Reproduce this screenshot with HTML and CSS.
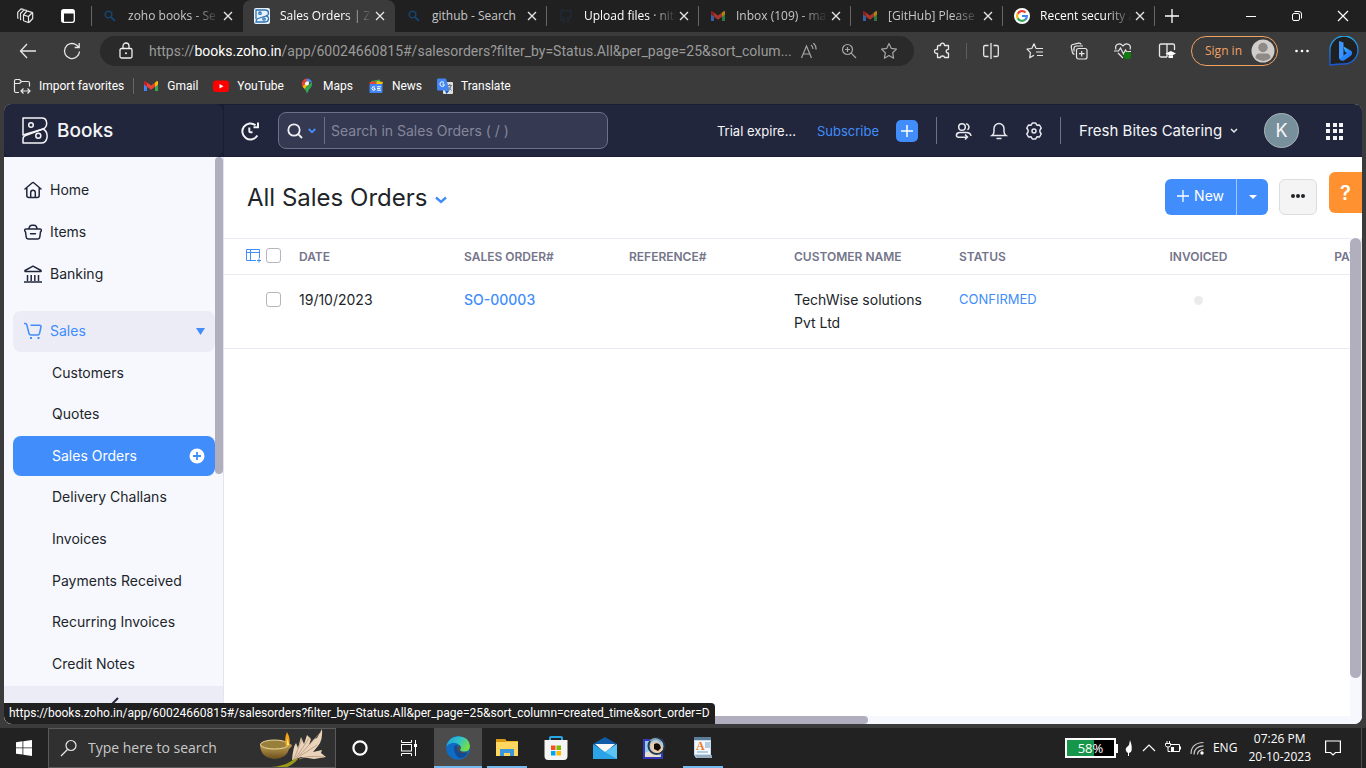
FILE: index.html
```html
<!DOCTYPE html>
<html lang="en">
<head>
<meta charset="utf-8">
<title>Sales Orders | Zoho Books</title>
<link rel="stylesheet" href="styles.css">
</head>
<body>
<svg class="defs" aria-hidden="true">
  <symbol id="close" viewBox="0 0 16 16"><path d="M4 4l8 8M12 4l-8 8" fill="none" stroke="currentColor" stroke-width="1.3"/></symbol>
  <symbol id="find" viewBox="0 0 16 16"><circle cx="6.500" cy="6.500" r="3.300" fill="none" stroke="#17426a" stroke-width="1.600"/><path d="M9 9l4 4" stroke="#17426a" stroke-width="2"/></symbol>
  <symbol id="gmail" viewBox="0 0 16 16"><path d="M1 4v9h3V6z" fill="#4285f4"/><path d="M15 4v9h-3V6z" fill="#34a853"/><path d="M1 3.500v3l3 2.200V4.500L2.800 3.400Q1.500 2.600 1 3.500z" fill="#c5221f"/><path d="M4 4.500l4 3 4-3v4.200l-4 3-4-3z" fill="#ea4335"/><path d="M15 3.500v3l-3 2.200V4.500l1.200-1.100q1.300-.8 1.800.1z" fill="#fbbc04"/></symbol>
  <symbol id="books" viewBox="0 0 26 27"><g fill="none" stroke="currentColor" stroke-width="1.500" stroke-linejoin="round"><path d="M1 18V1H20c5.500 0 6.500 8.500 1 11z"/><path d="M21 12L3.500 18.500Q1 19.500 1 22v4h18c7.500 0 8-11 2-14"/><circle cx="9" cy="8" r="2.300"/><circle cx="16.300" cy="18.800" r="2.500"/></g></symbol>
</svg>

<header class="browser">
  <div class="tabstrip">
    <button class="strip-btn" aria-label="Workspaces"><svg width="18" height="18" viewBox="0 0 18 18" fill="none" stroke="#e8e8e8" stroke-width="1.200" stroke-linejoin="round"><path d="M7.500 8l3-3.500q.5-.6 1.200-.4L16 5.300q.7.300.7 1v5.200L13.500 15q-.5.700-1.200.5L8.200 14q-.7-.3-.7-1zM7.500 8l5 1.500L16.500 5.500M12.500 9.500v6M5.200 13q-.7-.3-.7-1V6.500L8 2.800l3 .7M2.500 11.500q-.8-.3-.8-1V5.300L5 1.800l2.500.5"/></svg></button>
    <button class="strip-btn" aria-label="Tab actions"><svg width="16" height="16" viewBox="0 0 16 16"><rect x="1.700" y="1.700" width="12.600" height="12.600" rx="2" fill="none" stroke="#fff" stroke-width="1.300"/><path d="M2 2h12v3.500H2zM2 5.500h2V14H2z" fill="#fff"/></svg></button>
    <div class="tabs" role="tablist">
      <div class="tab sep-left" role="tab"><svg class="i16"><use href="#find"/></svg><span class="tab-title">zoho books - Se</span><button class="tab-x" aria-label="Close tab"><svg class="i16"><use href="#close"/></svg></button></div>
      <div class="tab active" role="tab" aria-selected="true"><svg class="i16 fav" viewBox="0 0 16 16"><rect width="16" height="16" rx="2" fill="#e8f2fa"/><g fill="none" stroke="#2e74b5" stroke-width="1.300"><path d="M2 11V2h9c4.500 0 4.500 5 1 6L4 10.500q-2 .8-2 3.500h9c4.500 0 4.500-6 1-6"/><circle cx="6" cy="5.200" r="1.200"/><circle cx="10" cy="11" r="1.200"/></g></svg><span class="tab-title">Sales Orders | Zo</span><button class="tab-x" aria-label="Close tab"><svg class="i16"><use href="#close"/></svg></button></div>
      <div class="tab sep-right full" role="tab"><svg class="i16"><use href="#find"/></svg><span class="tab-title">github - Search</span><button class="tab-x" aria-label="Close tab"><svg class="i16"><use href="#close"/></svg></button></div>
      <div class="tab sep-right lit" role="tab"><svg class="i16" viewBox="0 0 16 16"><path d="M6 15v-2.500c-3 .7-3.200-1.300-4.200-1.700M10 15v-3q0-1-.6-1.500c3-.4 4-1.500 4-4q0-1.300-.9-2.300.4-1.200-.1-2.200-1.200 0-2.400.9-2-.5-4 0Q4.800 2 3.600 2q-.5 1 0 2.200-1 1-1 2.300c0 2.500 1 3.600 4 4" fill="none" stroke="#202a35" stroke-width="1.700"/></svg><span class="tab-title">Upload files · nitl</span><button class="tab-x" aria-label="Close tab"><svg class="i16"><use href="#close"/></svg></button></div>
      <div class="tab sep-right dim" role="tab"><svg class="i16"><use href="#gmail"/></svg><span class="tab-title">Inbox (109) - ma</span><button class="tab-x" aria-label="Close tab"><svg class="i16"><use href="#close"/></svg></button></div>
      <div class="tab sep-right dim" role="tab"><svg class="i16"><use href="#gmail"/></svg><span class="tab-title">[GitHub] Please</span><button class="tab-x" aria-label="Close tab"><svg class="i16"><use href="#close"/></svg></button></div>
      <div class="tab sep-right lit" role="tab"><svg class="i16" viewBox="0 0 16 16"><circle cx="8" cy="8" r="8" fill="#fff"/><g fill="none" stroke-width="2.200"><path d="M11.500 4.500A4.900 4.900 0 0 0 3.700 5.800" stroke="#ea4335"/><path d="M3.700 5.800a4.900 4.900 0 0 0 0 4.400" stroke="#fbbc05"/><path d="M3.700 10.200a4.900 4.900 0 0 0 7.500 1.500" stroke="#34a853"/><path d="M11.200 11.700Q12.900 10.300 12.900 8H8" stroke="#4285f4"/></g></svg><span class="tab-title">Recent security a</span><button class="tab-x" aria-label="Close tab"><svg class="i16"><use href="#close"/></svg></button></div>
      <button class="new-tab" aria-label="New tab"><svg class="i16" viewBox="0 0 16 16"><path d="M8 1v14M1 8h14" stroke="#fff" stroke-width="1.300"/></svg></button>
    </div>
    <div class="win-controls">
      <button aria-label="Minimize"><svg width="12" height="12" viewBox="0 0 12 12"><path d="M1 6.500h10" stroke="#fff"/></svg></button>
      <button aria-label="Restore"><svg width="12" height="12" viewBox="0 0 12 12" fill="none" stroke="#fff"><rect x="1.500" y="3.500" width="7" height="7" rx="1.500"/><path d="M3.500 1.500H8q2.500 0 2.500 2.500v4.500"/></svg></button>
      <button aria-label="Close window"><svg width="12" height="12" viewBox="0 0 12 12"><path d="M1 1l10 10M11 1L1 11" stroke="#fff" stroke-width="1.200"/></svg></button>
    </div>
  </div>

  <div class="toolbar">
    <button class="tool" aria-label="Back"><svg width="18" height="18" viewBox="0 0 18 18" fill="none" stroke="#e8e8e8" stroke-width="1.300"><path d="M17 9H1.500M8 2L1.500 9 8 16"/></svg></button>
    <button class="tool" aria-label="Refresh"><svg width="18" height="18" viewBox="0 0 18 18" fill="none" stroke="#e8e8e8" stroke-width="1.300"><path d="M16.500 9.500A7.500 7.500 0 1 1 13.500 3L16 5.200M16.200 1v4.500h-4.500"/></svg></button>
    <div class="address">
      <svg class="lock" width="16" height="18" viewBox="0 0 16 18"><rect x="2" y="6.500" width="12" height="9.500" rx="1.500" fill="none" stroke="#f0f0f0" stroke-width="1.300"/><path d="M5 6.500V4a3 3 0 0 1 6 0v2.500" fill="none" stroke="#f0f0f0" stroke-width="1.300"/><circle cx="8" cy="11.200" r="1" fill="#f0f0f0"/></svg>
      <div class="url" role="textbox" aria-label="Address" tabindex="0">https://<b>books.zoho.in</b>/app/60024660815#/salesorders?filter_by=Status.All&amp;per_page=25&amp;sort_colum...</div>
      <button class="addr-btn" aria-label="Read aloud"><svg width="18" height="16" viewBox="0 0 18 16" fill="none" stroke="#a6a6a6" stroke-width="1.200"><path d="M1.500 15L6.500 3l5 12M3.200 11h6.600M11 2q2 1.500 2 4M13.300 0q3 2.500 2.700 6.500"/></svg></button>
      <button class="addr-btn" aria-label="Zoom"><svg width="16" height="16" viewBox="0 0 16 16" fill="none" stroke="#a6a6a6" stroke-width="1.200"><circle cx="6.500" cy="6.500" r="5"/><path d="M10.200 10.200L15 15M6.500 4v5M4 6.500h5"/></svg></button>
      <button class="addr-btn" aria-label="Add to favorites"><svg width="18" height="18" viewBox="0 0 18 18" fill="none" stroke="#a6a6a6" stroke-width="1.200" stroke-linejoin="round"><path d="M9 1.500l2.300 4.900 5.200.7-3.800 3.700.9 5.400L9 13.600l-4.600 2.600.9-5.400L1.500 7.100l5.200-.7z"/></svg></button>
    </div>
    <div class="tools">
      <button class="tool" aria-label="Extensions"><svg width="18" height="18" viewBox="0 0 18 18" fill="none" stroke="#e8e8e8" stroke-width="1.300" stroke-linejoin="round"><path d="M5.500 3.500h2q0-2.300 2-2.300t2 2.300H15.500v3.800q-2.300 0-2.300 1.900t2.300 1.900v4.400H11.500q0-1.500-2-1.500t-2 1.500h-3v-4Q1.500 11.500 1.500 9.300T4.500 7.500v-3q0-1 1-1z"/></svg></button>
      <span class="tool-sep"></span>
      <button class="tool" aria-label="Split screen"><svg width="18" height="18" viewBox="0 0 18 18" fill="none" stroke="#e8e8e8" stroke-width="1.300"><path d="M9 1v16M6.500 3.500H3Q1.700 3.500 1.700 5v8q0 1.500 1.300 1.500h3.500M11.500 3.500H15q1.300 0 1.300 1.500v8q0 1.500-1.300 1.500h-3.500"/></svg></button>
      <button class="tool" aria-label="Favorites"><svg width="18" height="18" viewBox="0 0 18 18" fill="none" stroke="#e8e8e8" stroke-width="1.200" stroke-linejoin="round"><path d="M10 6.500L8 1.800 5.800 6.500l-4.800.6 3.500 3.500-.8 5.200L8 13.300M10 6.500h7M10 10h7M11 13.500h6"/></svg></button>
      <button class="tool" aria-label="Collections"><svg width="18" height="18" viewBox="0 0 18 18" fill="none" stroke="#e8e8e8" stroke-width="1.200"><rect x="6.500" y="6.500" width="10.500" height="10.500" rx="2"/><path d="M11.700 9v5.500M9 11.700h5.500M4.500 12.500Q2.800 12 2.300 10L1.200 5q-.2-2 1.500-2.500l6-1.300q2-.2 2.500 1.300M4 9.500V6.500q0-2.500 2.500-2.500H13"/></svg></button>
      <button class="tool" aria-label="Browser essentials"><svg width="18" height="18" viewBox="0 0 18 18" fill="none" stroke="#e8e8e8" stroke-width="1.200"><path d="M2 7.500Q.8 4 3.200 2.500 6.500.8 9 4q2.500-3.200 5.800-1.500Q17.200 4 16 7.500M4 11l5 5M0 9h4.500L6.500 6l3 6 2-4 1 1.500H17"/><circle cx="13.500" cy="13.500" r="3.700" fill="#107c10" stroke="none"/></svg></button>
      <button class="tool" aria-label="Immersive reader"><svg width="18" height="18" viewBox="0 0 18 18" fill="none" stroke="#e8e8e8" stroke-width="1.300"><path d="M9 15V2H3Q1.500 2 1.500 3.500v10Q1.500 15 3 15h6M9 2h6q1.500 0 1.500 1.500V8"/><path d="M7.500 11.500L13 9l5 2.500-5 2.500zM10.500 13.500v2.500h4.500v-2.500z" fill="#fff" stroke="none"/></svg></button>
      <button class="signin">Sign in<svg width="24" height="24" viewBox="0 0 24 24"><circle cx="12" cy="12" r="11.500" fill="#d0cdca"/><circle cx="12" cy="8.500" r="4.700" fill="#8d8a87"/><path d="M4.500 19q0-4.500 4-4.500h7q4 0 4 4.500-7 6-15 0z" fill="#8d8a87"/></svg></button>
      <button class="tool" aria-label="Settings and more"><svg width="16" height="4" viewBox="0 0 16 4" fill="#fff"><circle cx="2.500" cy="2" r="1.300"/><circle cx="8" cy="2" r="1.300"/><circle cx="13.500" cy="2" r="1.300"/></svg></button>
      <button class="bing" aria-label="Bing"><svg width="30" height="30" viewBox="0 0 30 30"><defs><linearGradient id="bg1" x1="0" y1="0" x2="0" y2="1"><stop offset="0" stop-color="#25a8ef"/><stop offset="1" stop-color="#1a57d8"/></linearGradient><linearGradient id="bg2" x1="0" y1="0" x2="1" y2="1"><stop offset="0" stop-color="#48e1e5"/><stop offset=".5" stop-color="#258bff"/><stop offset="1" stop-color="#2f6fff"/></linearGradient></defs><path d="M1 29V15A14 14 0 1 1 15 28Q8 28 1 29z" fill="#202020" stroke="url(#bg1)" stroke-width="1.300"/><path d="M10 5l4.500 1.500V20l-1.500 4.500-3-2.500z" fill="#3d93ff"/><path d="M14.500 10.500l8 4.500q1.500 3-1 5L15 24.500q-3 1-5-2l8-5.500-2-1z" fill="url(#bg2)"/></svg></button>
    </div>
  </div>

  <nav class="favorites" aria-label="Favorites bar">
    <a href="#"><svg width="18" height="16" viewBox="0 0 18 16" fill="none" stroke="#e8e8e8" stroke-width="1.200"><path d="M6 14.500H3Q1.500 14.500 1.500 13V3Q1.500 1.500 3 1.500h3.500l2 2H15q1.500 0 1.500 1.500v3.500M1.500 5.500h5l2-2M8.500 13h8M10.500 10.500L8 13l2.500 2.500M14.500 10.500L17 13l-2.500 2.500"/></svg>Import favorites</a>
    <span class="fav-sep"></span>
    <a href="#"><svg class="i16"><use href="#gmail"/></svg>Gmail</a>
    <a href="#"><svg class="i16" viewBox="0 0 16 16"><rect y="2.500" width="16" height="11.500" rx="3" fill="#f00"/><path d="M6.500 6l4 2.300-4 2.300z" fill="#fff"/></svg>YouTube</a>
    <a href="#"><svg class="i16" viewBox="0 0 16 16"><path d="M8 .5A5.300 5.300 0 0 0 3.800 2.700L8 6z" fill="#ea4335"/><path d="M8 .5l-1 4.800L12.900 4Q11.500.7 8 .5z" fill="#4285f4"/><path d="M3.800 2.700Q1.800 5.500 3.500 8.500L7 5.300z" fill="#ea4335"/><path d="M3.500 8.500l6-6q1 3.500-1 5l-3 3.500z" fill="#fbbc04"/><path d="M12.900 4q.9 2.500-.6 4.700Q9 12 8 15.800 7.300 13 5.500 11z" fill="#34a853"/><circle cx="8" cy="5.500" r="1.900" fill="#fff"/></svg>Maps</a>
    <a href="#"><svg class="i16" viewBox="0 0 16 16"><path d="M3 3l9-1.500V6H3z" fill="#34a853"/><path d="M1 4.500l6-1.500 1 3H2z" fill="#ea4335"/><path d="M9 3l6 1-1 3H8z" fill="#fbbc04"/><rect x="1.500" y="6" width="13" height="9" rx="1" fill="#4285f4"/><path d="M7 9q-3-1-3 1.500T7 12v-1.500H5.800M9 8.800h4M9 10.500h3.300M9 12.200h4" stroke="#fff" fill="none"/></svg>News</a>
    <a href="#"><svg class="i16" viewBox="0 0 16 16"><rect x="6" y="4" width="10" height="12" rx="1" fill="#e0e0e0"/><path d="M0 1.500Q0 .5 1 .5h8l3.500 12H1q-1 0-1-1z" fill="#4285f4"/><path d="M8 12.500h4.500L9.500 16z" fill="#1a57c0"/><path d="M7 4.300Q3 2.800 3 6t4 2V6H5.500" fill="none" stroke="#fff"/><path d="M10.500 7.500H15M12.800 6v1.500M14 7.800q-.5 2.500-2 4M11.700 9l2.800 3.500" fill="none" stroke="#6a7580"/></svg>Translate</a>
  </nav>
</header>

<div class="app">
  <header class="app-bar">
    <a class="brand" href="#"><svg width="26" height="27"><use href="#books"/></svg>Books</a>
    <div class="app-bar-main">
      <button class="ic history" aria-label="Recent"><svg width="20" height="20" viewBox="0 0 20 20" fill="none" stroke="#f2f2f5" stroke-width="2"><path d="M17.300 14.500A8 8 0 1 1 15.500 4.300M18 1.500v4.700h-4.500M9.300 6.500v3.700q0 1 1 1h2.200"/></svg></button>
      <div class="search">
        <button class="ic" aria-label="Search scope"><svg width="16" height="16" viewBox="0 0 16 16" fill="none" stroke="#f2f2f5" stroke-width="1.800"><circle cx="7" cy="7" r="5.700"/><path d="M11.200 11.200L15 15"/></svg><svg width="8" height="6" viewBox="0 0 8 6" fill="none" stroke="#408dfb" stroke-width="1.800"><path d="M.7 1L4 4.200 7.300 1"/></svg></button>
        <input type="text" aria-label="Search in Sales Orders" placeholder="Search in Sales Orders ( / )">
      </div>
      <span class="trial">Trial expire...</span>
      <a class="subscribe" href="#">Subscribe</a>
      <button class="quick" aria-label="Quick create"><svg width="12" height="12" viewBox="0 0 12 12"><path d="M6 0v12M0 6h12" stroke="#fff" stroke-width="1.500"/></svg></button>
      <div class="icons">
        <button class="ic" aria-label="Referrals"><svg width="18" height="18" viewBox="0 0 18 18" fill="none" stroke="#e8e8ee" stroke-width="1.500"><circle cx="7" cy="5" r="3.300"/><path d="M11 1.800a3.300 3.300 0 0 1 1.500 6M1.500 14Q1 10.500 5 10.500h5q5.500-.5 6 3.500M3.500 11q-2 .5-2 2.500 0 1.700 2 1.700h8.500M10 12.500l2.500 2.500-2.500 2.500"/></svg></button>
        <button class="ic" aria-label="Notifications"><svg width="18" height="18" viewBox="0 0 18 18" fill="none" stroke="#e8e8ee" stroke-width="1.500"><path d="M2 13.500h14q-2-1.500-2-4V6.500a5 5 0 0 0-10 0v3q0 2.500-2 4zM6.500 16.500h5"/></svg></button>
        <button class="ic" aria-label="Settings"><svg width="18" height="18" viewBox="0 0 18 18" fill="none" stroke="#e8e8ee" stroke-width="1.500" stroke-linejoin="round"><path d="M7.300 1h3.400l1.200 2.200 2.600-.2 1.700 3-1.300 2.200v1.600l1.300 2.200-1.700 3-2.600-.2-1.200 2.200H7.300l-1.200-2.200-2.600.2-1.700-3 1.300-2.200V8.200L1.800 6l1.700-3 2.600.2z"/><circle cx="9" cy="9" r="2"/></svg></button>
      </div>
      <button class="org">Fresh Bites Catering<svg width="8" height="6" viewBox="0 0 8 6" fill="none" stroke="#e8e8ee" stroke-width="1.500"><path d="M1 1l3 3 3-3"/></svg></button>
      <button class="avatar" aria-label="Account">K</button>
      <button class="ic" aria-label="All apps"><svg width="18" height="18" viewBox="0 0 18 18" fill="#f5f5f8"><path d="M0 1h4v4H0zM7 1h4v4H7zM13 1h4v4h-4zM0 7h4v4H0zM7 7h4v4H7zM13 7h4v4h-4zM0 14h4v4H0zM7 14h4v4H7zM13 14h4v4h-4z"/></svg></button>
    </div>
  </header>

  <div class="body">
    <aside class="sidebar">
      <div class="side-scroll">
        <nav class="side-nav" aria-label="Modules">
          <div class="side-top">
            <a href="#"><svg width="18" height="18" viewBox="0 0 18 18" fill="none" stroke="#21263c" stroke-width="1.500" stroke-linejoin="round" stroke-linecap="round"><path d="M1 8l7-6q1-.8 2 0l7 6M2.800 7v7.500q0 2 2 2h8.400q2 0 2-2V7M6.700 16v-4.500a2.300 2.300 0 0 1 4.600 0V16"/></svg>Home</a>
            <a href="#"><svg width="18" height="18" viewBox="0 0 18 18" fill="none" stroke="#21263c" stroke-width="1.500" stroke-linejoin="round" stroke-linecap="round"><path d="M2 6h14q1.500 0 1.300 1.500-.1.900-.8 1.300l-.7 5.200q-.3 2-2.300 2h-9q-2 0-2.300-2l-.7-5.200Q.8 8.400.7 7.500.5 6 2 6zM4.800 6Q5.500 2.200 8 2.200h2q2.500 0 3.200 3.800M6.500 10.800h5"/></svg>Items</a>
            <a href="#"><svg width="18" height="18" viewBox="0 0 18 18" fill="none" stroke="#21263c" stroke-width="1.500" stroke-linejoin="round"><path d="M1 6.500v-1L9 1.200l8 4.300v1zM3.500 10v6M7.200 10v6M10.800 10v6M14.500 10v6M0 17h18"/></svg>Banking</a>
          </div>
          <div class="side-group">
            <a class="group-head" href="#"><svg width="18" height="18" viewBox="0 0 18 18" fill="none" stroke="#408dfb" stroke-width="1.500" stroke-linejoin="round"><path d="M0 1.500h1.500q1 0 1.300 1.200L5 11.500q.4 1.500 2 1.500h6.500q1.700 0 2-1.500L17 5q.3-1.800-1.500-1.800H6.500"/><path d="M6 15h2v2H6zM13.500 15h2v2h-2z" fill="#408dfb" stroke="none"/></svg>Sales<svg class="end" width="9" height="7" viewBox="0 0 9 7"><path d="M0 0h9L4.500 7z" fill="#408dfb"/></svg></a>
            <a href="#">Customers</a>
            <a href="#">Quotes</a>
            <a class="current" href="#" aria-current="page">Sales Orders<svg class="end" width="16" height="16" viewBox="0 0 16 16"><circle cx="8" cy="8" r="7.500" fill="#fff"/><path d="M8 4v8M4 8h8" stroke="#408dfb" stroke-width="1.800"/></svg></a>
            <a href="#">Delivery Challans</a>
            <a href="#">Invoices</a>
            <a href="#">Payments Received</a>
            <a href="#">Recurring Invoices</a>
            <a href="#">Credit Notes</a>
          </div>
        </nav>
        <div class="side-track"><span class="side-thumb"></span></div>
      </div>
      <button class="collapse" aria-label="Collapse sidebar"><svg width="10" height="16" viewBox="0 0 10 16" fill="none" stroke="#21263c" stroke-width="2"><path d="M9 1L2 8l7 7"/></svg></button>
    </aside>

    <main class="content">
      <div class="page-head">
        <h1>All Sales Orders<svg width="12" height="8" viewBox="0 0 12 8" fill="none" stroke="#408dfb" stroke-width="2.400"><path d="M1 1.500l5 4.500 5-4.500"/></svg></h1>
        <div class="actions">
          <div class="split">
            <button class="new"><svg width="12" height="12" viewBox="0 0 12 12"><path d="M6 0v12M0 6h12" stroke="#fff" stroke-width="1.300"/></svg>New</button>
            <button class="drop" aria-label="More create options"><svg width="8" height="4" viewBox="0 0 8 4"><path d="M0 0h8L4 4z" fill="#fff"/></svg></button>
          </div>
          <button class="more" aria-label="More actions"><svg width="16" height="6" viewBox="0 0 16 6" fill="#212529"><circle cx="3" cy="3" r="2"/><circle cx="8" cy="3" r="2"/><circle cx="13" cy="3" r="2"/></svg></button>
        </div>
        <button class="help" aria-label="Help">?</button>
      </div>
      <div class="list-area">
        <div class="list-scroll">
          <table>
            <thead>
              <tr>
                <th class="pick"><span><svg width="15" height="14" viewBox="0 0 15 14" fill="none" stroke="#408dfb"><path d="M10 11.500H.5V.5h13V9M.5 3.500h13M4.500 .5v11M13 9.500v4M11 11.500h4"/></svg><input type="checkbox" aria-label="Select all"></span></th>
                <th>DATE</th><th>SALES ORDER#</th><th>REFERENCE#</th><th>CUSTOMER NAME</th><th>STATUS</th><th class="mid">INVOICED</th><th class="mid">PAYMENT</th>
              </tr>
            </thead>
            <tbody>
              <tr>
                <td class="pick"><span><input type="checkbox" aria-label="Select SO-00003"></span></td>
                <td>19/10/2023</td><td><a class="order" href="#">SO-00003</a></td><td></td><td>TechWise solutions Pvt Ltd</td><td class="status">CONFIRMED</td><td class="mid"><span class="dot"></span></td><td></td>
              </tr>
            </tbody>
          </table>
        </div>
        <div class="v-track"><span class="v-thumb"></span></div>
      </div>
      <div class="h-track"><span class="h-thumb"></span></div>
    </main>
  </div>
  <div class="status-url">https://books.zoho.in/app/60024660815#/salesorders?filter_by=Status.All&amp;per_page=25&amp;sort_column=created_time&amp;sort_order=D</div>
</div>

<footer class="taskbar">
  <button class="start" aria-label="Start"><svg width="16" height="16" viewBox="0 0 16 16" fill="#fff"><path d="M0 2.200l6.500-.9v6.200H0zM7.300 1.200L16 0v7.500H7.300zM0 8.300h6.500v6.300L0 13.700zM7.300 8.300H16V16l-8.700-1.200z"/></svg></button>
  <div class="task-search">
    <svg width="18" height="18" viewBox="0 0 18 18" fill="none" stroke="#e8e8e8" stroke-width="1.200"><circle cx="11" cy="6.500" r="5"/><path d="M7.500 10.500L1 17"/></svg>
    <input type="text" aria-label="Search" placeholder="Type here to search">
    <svg class="lamp" width="72" height="38" viewBox="0 0 72 38"><defs><linearGradient id="bowl" x1="0" y1="0" x2="0" y2="1"><stop offset="0" stop-color="#c9a85c"/><stop offset="1" stop-color="#6b4f1c"/></linearGradient></defs><path d="M12 38q14-1 22-7l3-3 2 2q-7 8-15 9z" fill="#9a9a16"/><path d="M1 15q0 14 15 15 12-1 14-10 3-2 3-4l-4-2z" fill="url(#bowl)"/><ellipse cx="15.500" cy="15.500" rx="14" ry="4.500" fill="#98803c" stroke="#ecd79a"/><path d="M27 17q-2-7 1-14 4 7 2 14z" fill="#f6a318"/><path d="M28 16l.5-7 1.500 7z" fill="#fff3a0"/><path d="M33 31q1-13 4-17l2 5 3-11 3 7 3-9 4 4-2 6 5-6 3-1 5-9q1 11-4 17l-5 6 9-2-1 3 5 4-12 2-13-2z" fill="#e9d3ba"/><path d="M35 30L43 10M36 30L51 8M37 30L62 3M40 30q10-4 25-2M41 27l17-11" stroke="#b7977a" stroke-width=".800" fill="none"/></svg>
  </div>
  <div class="tasks">
    <button class="task" aria-label="Cortana"><svg width="16" height="16" viewBox="0 0 16 16"><circle cx="8" cy="8" r="6.600" fill="none" stroke="#fff" stroke-width="2.200"/></svg></button>
    <button class="task" aria-label="Task view"><svg width="16" height="16" viewBox="0 0 16 16" fill="none" stroke="#fff"><path d="M.5 0v2.500h10V0M.5 16v-2.500h10V16M14.500 0v16"/><rect x=".5" y="4.500" width="10" height="6.500"/><path d="M13 4h3v3h-3z" fill="#fff" stroke="none"/></svg></button>
    <button class="task focused" aria-label="Microsoft Edge"><svg width="24" height="24" viewBox="0 0 24 24"><defs><linearGradient id="e1" x1="0" y1="0" x2="1" y2=".5"><stop offset="0" stop-color="#1a9de0"/><stop offset=".55" stop-color="#32c3c8"/><stop offset="1" stop-color="#70e046"/></linearGradient></defs><circle cx="12" cy="12" r="11.800" fill="#0f6cc4"/><path d="M.5 11Q1.500 1 12 .2 23 .5 24 10q0 5.500-6 5.500-4 0-4-2 1.500-2 0-4Q11 6 6 7 1.500 8 .5 11z" fill="url(#e1)"/><path d="M8 11q1-2.500 4-2.500-2 2.500 0 5.500 4 4.500 10 2-3 6-8 6-6-2-6-11z" fill="#134a93"/><path d="M14 9.500q1.500 2 0 4 0 2.500 4 2.500 3 0 5-1.500-3 3-7 2.500-5-1-5-5 0-2 3-2.500z" fill="#4c4c4c"/></svg></button>
    <button class="task open" aria-label="File Explorer"><svg width="22" height="20" viewBox="0 0 22 20"><path d="M0 1h9l1.500 2H22v15H0z" fill="#f2b82c"/><path d="M0 4h22v14H0z" fill="#ffd75e"/><path d="M0 1h9l1 3H0z" fill="#d89a15"/><path d="M4 11h14v7h-4v-3H8v3H4z" fill="#3b97dc"/></svg></button>
    <button class="task" aria-label="Microsoft Store"><svg width="24" height="24" viewBox="0 0 24 24"><path d="M6 5V2q0-1 1-1h10q1 0 1 1v3" fill="none" stroke="#27a8ea" stroke-width="2"/><path d="M.5 4h23v16q0 4-3.500 4H4Q.5 24 .5 20z" fill="#f5f5f5"/><path d="M7 9.500h4.500V14H7z" fill="#f25022"/><path d="M12.500 9.500H17V14h-4.500z" fill="#7fba00"/><path d="M7 15h4.500v4.500H7z" fill="#00a4ef"/><path d="M12.500 15H17v4.500h-4.500z" fill="#ffb900"/></svg></button>
    <button class="task" aria-label="Mail"><svg width="24" height="22" viewBox="0 0 24 22"><path d="M0 7l12-7 12 7-12 8z" fill="#0f5ba8"/><path d="M2 7h20l-9 8h-2z" fill="#f7f7f7"/><path d="M0 7l12 8 12-8v15H0z" fill="#2aa4e6"/><path d="M24 7v15L12 15z" fill="#5cc5f8"/></svg></button>
    <button class="task" aria-label="Image viewer"><svg width="24" height="24" viewBox="0 0 24 24"><rect x="2" y="4" width="18" height="18" fill="#92c9e8" stroke="#3637b8" stroke-width="2"/><path d="M3 17l8-4 8 8H3z" fill="#e7dfd1"/><circle cx="14.500" cy="10" r="8" fill="#b4c7d4" stroke="#26384e" stroke-width="2"/><path d="M9 8q5-4 10 1l2 4q-2 4-6 4-4-1-6-4z" fill="#efcda8"/><path d="M12 8q4-2 6 1l1 3-3 3-4-2z" fill="#140c08"/><path d="M8 5q6-5 11 1" stroke="#87a5b8" fill="none" stroke-width="1.500"/></svg></button>
    <button class="task open" aria-label="WordPad"><svg width="20" height="22" viewBox="0 0 20 22"><path d="M1 2h17v16l1 3H3l-2-3z" fill="#c7dcee"/><path d="M1 0h17v3H1z" fill="#5d7c98"/><path d="M2 4h15v13H2z" fill="#f4f9fd"/><text x="3" y="13" font-family="Liberation Serif, serif" font-size="12" font-weight="bold" fill="#ee7a24">A</text><path d="M12 6h5M12 8h5M12 10h5M4 15h11" stroke="#719fc8"/><path d="M2 18h17l-1 3H4z" fill="#96adc0"/></svg></button>
  </div>
  <div class="tray">
    <span class="battery">58%</span>
    <svg width="8" height="16" viewBox="0 0 8 16"><path d="M5 0q3 8 1 12l-2 1v3H3v-3Q0 11 1 8l3-3z" fill="#fff"/></svg>
    <button aria-label="Show hidden icons"><svg width="14" height="8" viewBox="0 0 14 8" fill="none" stroke="#fff" stroke-width="1.200"><path d="M1 7l6-6 6 6"/></svg></button>
    <svg width="16" height="14" viewBox="0 0 16 14" fill="none" stroke="#fff"><path d="M6 3.500h8.500v7H5.500M15.500 5.500v3M2 0v2M4.500 0v2M.5 2.500h5v2q0 1.500-2.500 1.500T.5 4.500zM3 6v4.500h2"/><path d="M6 6h3v4H6z" fill="#fff" stroke="none"/></svg>
    <svg width="14" height="14" viewBox="0 0 14 14" fill="none" stroke="#c8c8c8" stroke-width="1.200"><path d="M1 13Q1 2 13.500 1.500M4 13.500Q4 5.500 13.500 4.800M7.500 13.500Q7.500 9 13.500 8.300"/><circle cx="12" cy="12" r="1.700" fill="#fff" stroke="none"/></svg>
    <span class="lang">ENG</span>
    <div class="clock"><span>07:26 PM</span><span>20-10-2023</span></div>
    <button aria-label="Notifications" class="notes"><svg width="16" height="16" viewBox="0 0 16 16" fill="none" stroke="#fff" stroke-width="1.200"><path d="M.6 1h14.800v11.500H10.500L8 15l-2.500-2.500H.6z"/></svg></button>
  </div>
</footer>
</body>
</html>
```

FILE: styles.css
```css
* { box-sizing: border-box; }

body {
  margin: 0;
  min-height: 100vh;
  display: flex;
  flex-direction: column;
  background: #3b3b3b;
  font: 12px/16px "Open Sans", "Noto Sans", sans-serif;
  color: #fff;
  overflow: hidden;
}

button {
  border: 0;
  padding: 0;
  margin: 0;
  background: none;
  color: inherit;
  font: inherit;
  display: flex;
  align-items: center;
  justify-content: center;
  flex-shrink: 0;
}

a { color: inherit; text-decoration: none; }
svg { flex-shrink: 0; }
.defs { display: none; }
.i16 { width: 16px; height: 16px; }

/* Browser tab strip */
.tabstrip { display: flex; height: 32px; background: #202020; padding-left: 3px; }
.strip-btn { width: 44px; }
.strip-btn + .strip-btn { width: 42px; margin-right: 2px; }
.tabs { display: flex; flex: 1; min-width: 0; }
.tab {
  flex: 0 1 152px;
  min-width: 0;
  display: flex;
  align-items: center;
  padding: 0 7px 0 11px;
  gap: 10px;
  color: #c8c8c8;
  background-repeat: no-repeat;
  background-size: 1px 20px;
}
.sep-left { background-image: linear-gradient(#666, #666); background-position: left center; }
.sep-right { background-image: linear-gradient(#666, #666); background-position: right center; }
.tab.active { background: #3b3b3b; border-radius: 8px 8px 0 0; color: #fff; }
.tab.lit { color: #fff; }
.tab.dim > svg { opacity: .65; }
.tab-title {
  flex: 1;
  min-width: 0;
  white-space: nowrap;
  -webkit-mask-image: linear-gradient(to right, #000 70%, transparent);
  mask-image: linear-gradient(to right, #000 70%, transparent);
}
.full .tab-title { -webkit-mask-image: none; mask-image: none; }
.tab-x { color: #e8e8e8; margin-left: -10px; }
.new-tab { width: 34px; }
.win-controls { display: flex; }
.win-controls button { width: 46px; }

/* Browser toolbar */
.toolbar { display: flex; align-items: center; height: 38px; padding: 0 6px; }
.tool { width: 44px; height: 30px; }
.address {
  flex: 1;
  min-width: 0;
  display: flex;
  align-items: center;
  height: 30px;
  margin: 0 6px;
  padding: 0 5px 0 18px;
  border-radius: 15px;
  background: #2a2a2a;
}
.url {
  flex: 1;
  min-width: 0;
  margin-left: 15px;
  white-space: nowrap;
  font: 14px/20px Roboto, "Open Sans", sans-serif;
  color: #9a9a9a;
}
.url b { font-weight: 400; color: #fff; }
.addr-btn { width: 40px; height: 30px; }
.tools { display: flex; align-items: center; }
.tool-sep { width: 1px; height: 16px; margin: 0 2px; background: #5e5e5e; }
.signin {
  width: 87px;
  height: 30px;
  margin: 0 2px;
  padding: 0 2px 0 13px;
  justify-content: space-between;
  border: 1px solid #f0a263;
  border-radius: 15px;
  color: #f0a263;
}
.bing { width: 32px; margin-left: 4px; }

/* Favorites bar */
.favorites { display: flex; align-items: center; height: 34px; padding: 0 13px 2px; gap: 15px; font-family: Roboto, "Open Sans", sans-serif; }
.favorites a { display: flex; align-items: center; gap: 8px; }
.fav-sep { width: 1px; height: 16px; margin: 0 -6px; background: #666; }

/* Application window */
.app {
  position: relative;
  flex: 1;
  min-height: 0;
  margin: 0 4px 4px;
  display: flex;
  flex-direction: column;
  overflow: hidden;
  border-radius: 8px;
  background: #fff;
  color: #212529;
  font: 14px/20px Inter, "Liberation Sans", sans-serif;
}
.app-bar { display: flex; height: 53px; background: #1b1d35; color: #f5f5f8; }
.brand {
  width: 219px;
  display: flex;
  align-items: center;
  gap: 9px;
  padding-left: 18px;
  background: #21263c;
  border-radius: 8px;
  font-size: 19px;
  font-weight: 500;
}
.app-bar-main {
  flex: 1;
  display: flex;
  align-items: center;
  margin: 1px 0 1px 1px;
  padding: 0 18px 0 16px;
  background: #21263c;
}
.search {
  display: flex;
  width: 330px;
  height: 37px;
  margin-left: 18px;
  margin-right: auto;
  border: 1px solid #6c718a;
  border-radius: 8px;
  background: #353952;
}
.search .ic { gap: 5px; padding: 0 8px; }
.search input {
  flex: 1;
  min-width: 0;
  margin: 4px 0;
  padding: 0 6px;
  border: 0;
  border-left: 1px solid #6c718a;
  background: none;
  color: #fff;
  font: inherit;
  outline: 0;
}
.search input::placeholder { color: #85879a; opacity: 1; }
.trial, .subscribe { font-size: 13px; }
.subscribe { margin-left: 21px; color: #408dfb; }
.quick { width: 22px; height: 22px; margin: 0 18px 0 17px; border-radius: 5px; background: #408dfb; }
.icons {
  display: flex;
  align-items: center;
  gap: 17px;
  height: 27px;
  padding: 0 17px 0 18px;
  border: solid #6c718a;
  border-width: 0 1px;
}
.org { min-width: 159px; margin-left: 18px; justify-content: space-between; font-size: 15px; }
.avatar {
  width: 35px;
  height: 35px;
  margin: 0 27px 0 26px;
  border: 1px solid #a9b5ba;
  border-radius: 50%;
  background: #78909c;
  font-size: 18px;
}

.body { flex: 1; min-height: 0; display: flex; }

/* Sidebar */
.sidebar { width: 220px; display: flex; flex-direction: column; background: #f7f8fe; border-right: 1px solid #e4e4ee; }
.side-scroll { flex: 1; min-height: 0; display: flex; }
.side-nav { flex: 1; display: flex; flex-direction: column; padding: 12px 0 2px 9px; }
.side-top, .side-group { display: grid; grid-auto-rows: 1fr; gap: 1px; }
.side-top { height: 125px; margin-bottom: 17px; }
.side-group { flex: 1; }
.side-nav a { display: flex; align-items: center; gap: 8px; padding: 0 10px 0 11px; border-radius: 8px; }
.side-group a { padding-left: 39px; }
.side-group .group-head { padding-left: 11px; background: #ececf6; color: #408dfb; }
.side-group .current { background: #408dfb; color: #fff; }
.end { margin-left: auto; }
.side-track { width: 8px; }
.side-thumb { display: block; height: 60%; border-radius: 4px; background: #b1afbe; }
.collapse { height: 38px; background: #ececf6; }

/* Sales orders list */
.content { flex: 1; min-width: 0; display: flex; flex-direction: column; }
.page-head {
  position: relative;
  display: flex;
  align-items: center;
  justify-content: space-between;
  height: 81px;
  padding: 0 45px 1px 23px;
}
h1 { display: flex; align-items: center; gap: 8px; margin: 0; padding-top: 2px; font-size: 24px; line-height: 32px; font-weight: 400; }
h1 svg { margin-top: 3px; }
.actions { display: flex; gap: 11px; }
.split { display: flex; height: 36px; border-radius: 6px; background: #408dfb; color: #fff; }
.new { gap: 5px; padding: 0 12px 2px; }
.drop { width: 32px; border-left: 1px solid #a6c9fd; }
.more { width: 38px; height: 36px; padding-bottom: 2px; border: 1px solid #ddd; border-radius: 6px; background: #f4f4f4; }
.help {
  position: absolute;
  top: 15px;
  right: 0;
  width: 33px;
  height: 41px;
  border-radius: 6px 0 0 6px;
  background: #ff9130;
  color: #fff;
  font-size: 20px;
  font-weight: 600;
}
.list-area { flex: 1; min-height: 0; display: flex; }
.list-scroll { flex: 1; min-width: 0; overflow: hidden; }
table { width: 1222px; table-layout: fixed; border-collapse: collapse; border-top: 1px solid #ebeaf2; }
tr { border-bottom: 1px solid #ebeaf2; }
th { width: 165px; height: 36px; padding: 0 8px; text-align: left; font-size: 12px; font-weight: 600; color: #74748a; }
td { padding: 13px 8px 14px; vertical-align: top; line-height: 23px; }
th.pick, td.pick { width: 67px; padding-right: 10px; }
th.pick { padding-bottom: 2px; }
.pick span { display: flex; align-items: center; justify-content: flex-end; gap: 5px; height: 23px; }
.pick input {
  appearance: none;
  width: 15px;
  height: 15px;
  margin: 0;
  border: 1px solid #b5b5bd;
  border-radius: 3px;
  background: #fff;
}
.mid { text-align: center; }
.order { color: #408dfb; font-weight: 500; }
.status { color: #408dfb; font-size: 13px; }
.dot { display: inline-block; width: 9px; height: 9px; border-radius: 50%; background: #ebebeb; }
.v-track { width: 12px; background: #f7f8fe; border-right: 1px solid #e4e4ee; }
.v-thumb { display: block; height: 92%; border-radius: 6px; background: #b1afbe; }
.h-track { height: 8px; background: #f7f8fe; }
.h-thumb { display: block; width: 644px; height: 8px; border-radius: 4px; background: #b1afbe; }

.status-url {
  position: absolute;
  left: 0;
  bottom: 0;
  height: 21px;
  padding: 0 5px;
  border-radius: 0 4px 0 0;
  background: #202020;
  color: #fff;
  font: 12px/21px Roboto, "Open Sans", sans-serif;
  white-space: nowrap;
}

/* Desktop taskbar */
.taskbar { display: flex; height: 40px; background: #222; }
.start { width: 48px; }
.task-search {
  display: flex;
  align-items: center;
  width: 288px;
  padding: 0 4px 0 11px;
  border: 1px solid #5a5a5a;
  background: #303030;
}
.task-search input {
  flex: 1;
  min-width: 0;
  padding: 0 0 0 10px;
  border: 0;
  background: none;
  color: #fff;
  font: 14px/20px "Open Sans", "Noto Sans", sans-serif;
  outline: 0;
}
.task-search input::placeholder { color: #c8c8c8; opacity: 1; }
.tasks { display: flex; gap: 1px; }
.task { width: 48px; }
.focused { background: #4c4c4c; box-shadow: inset 0 -2px #76b9ed; }
.open { background: linear-gradient(#76b9ed, #76b9ed) center bottom / 40px 2px no-repeat; }
.tray {
  display: flex;
  align-items: center;
  gap: 9px;
  margin: 0 4px 0 auto;
  padding-right: 15px;
  border-right: 1px solid #4c4c4c;
}
.battery {
  position: relative;
  width: 51px;
  height: 20px;
  border: 2px solid #fff;
  background: linear-gradient(to right, #16964a 58%, #000 58%);
  font-size: 13px;
  text-align: center;
}
.battery::after {
  content: "";
  position: absolute;
  top: 4px;
  right: -4px;
  width: 2px;
  height: 9px;
  background: #fff;
}
.lang { margin-right: 2px; }
.clock { display: flex; flex-direction: column; gap: 2px; text-align: center; }
.notes { width: 26px; }
```
